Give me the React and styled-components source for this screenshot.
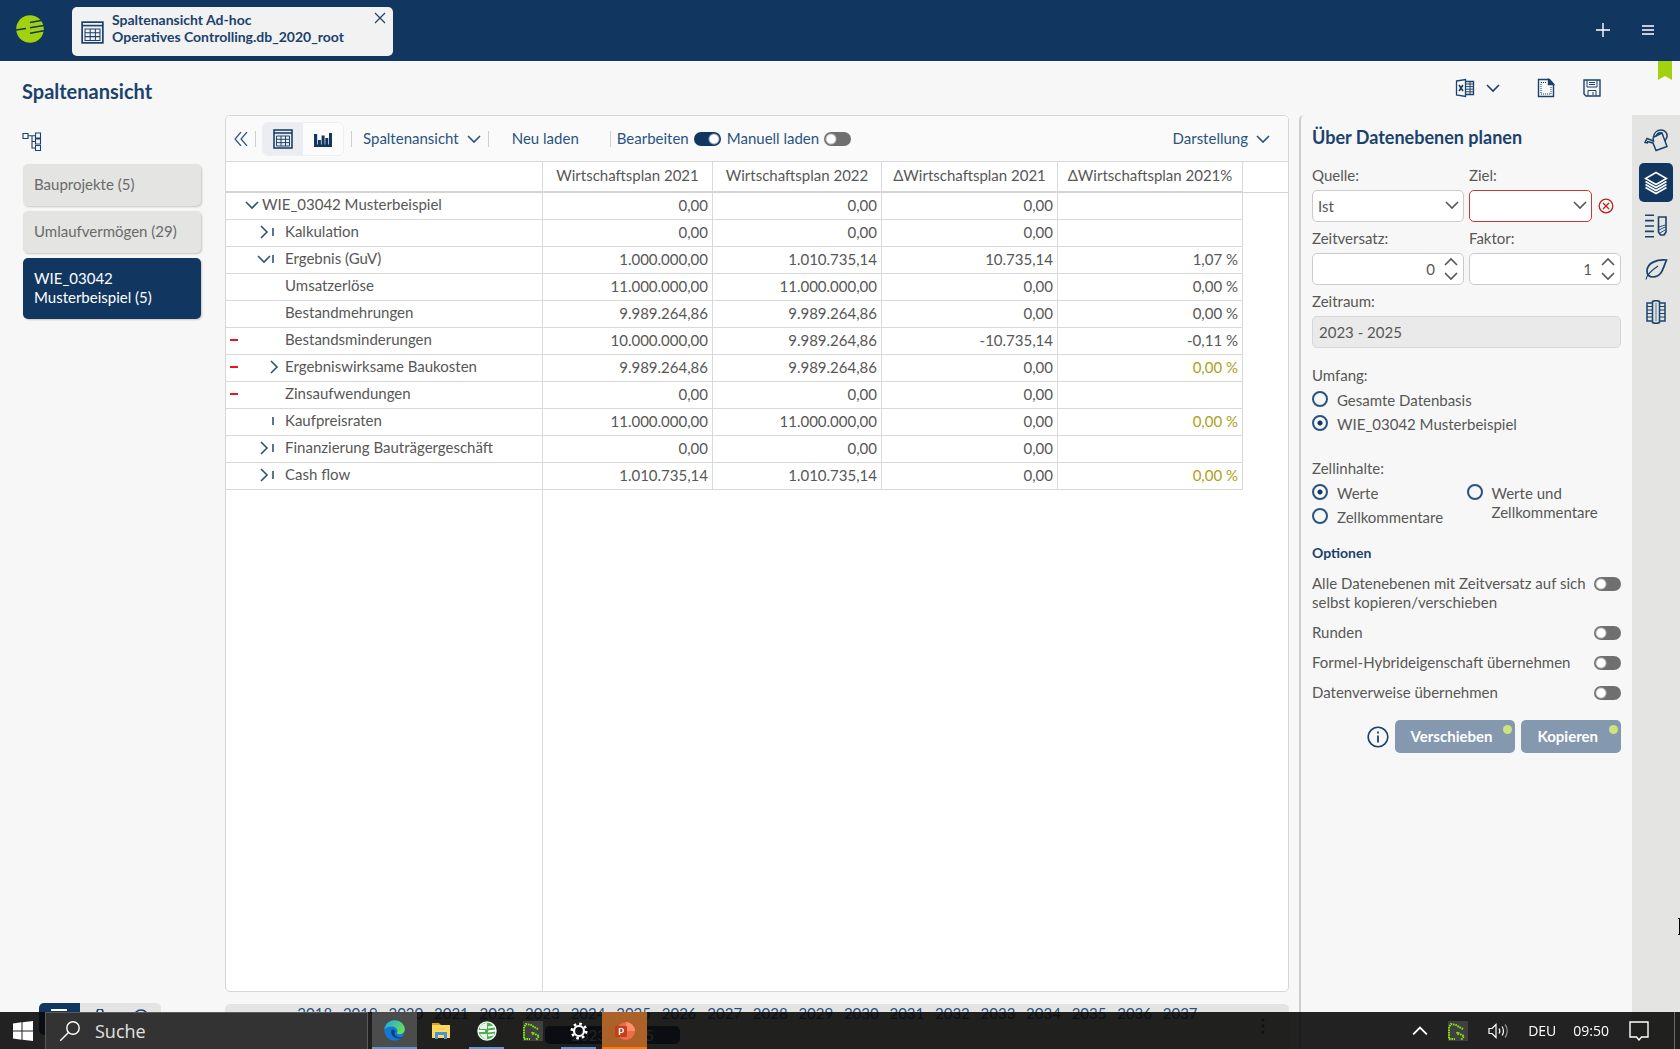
import React, { useState } from 'react';
import styled, { createGlobalStyle, css } from 'styled-components';

// data
const columns = ['Wirtschaftsplan 2021', 'Wirtschaftsplan 2022', 'ΔWirtschaftsplan 2021', 'ΔWirtschaftsplan 2021%'];

const rows = [
  { label: 'WIE_03042 Musterbeispiel', root: true, caret: 'down', values: ['0,00', '0,00', '0,00', ''] },
  { label: 'Kalkulation', caret: 'right', bar: true, values: ['0,00', '0,00', '0,00', ''] },
  { label: 'Ergebnis (GuV)', caret: 'down', bar: true, values: ['1.000.000,00', '1.010.735,14', '10.735,14', '1,07 %'] },
  { label: 'Umsatzerlöse', values: ['11.000.000,00', '11.000.000,00', '0,00', '0,00 %'] },
  { label: 'Bestandmehrungen', values: ['9.989.264,86', '9.989.264,86', '0,00', '0,00 %'] },
  { label: 'Bestandsminderungen', minus: true, values: ['10.000.000,00', '9.989.264,86', '-10.735,14', '-0,11 %'] },
  { label: 'Ergebniswirksame Baukosten', minus: true, caret: 'right', hint: true, values: ['9.989.264,86', '9.989.264,86', '0,00', '0,00 %'] },
  { label: 'Zinsaufwendungen', minus: true, values: ['0,00', '0,00', '0,00', ''] },
  { label: 'Kaufpreisraten', bar: true, hint: true, values: ['11.000.000,00', '11.000.000,00', '0,00', '0,00 %'] },
  { label: 'Finanzierung Bauträgergeschäft', caret: 'right', bar: true, values: ['0,00', '0,00', '0,00', ''] },
  { label: 'Cash flow', caret: 'right', bar: true, hint: true, values: ['1.010.735,14', '1.010.735,14', '0,00', '0,00 %'] },
];

const groups = ['Bauprojekte (5)', 'Umlaufvermögen (29)', 'WIE_03042 Musterbeispiel (5)'];

const years = Array.from({ length: 20 }, (_, i) => 2018 + i);

const options = [
  'Alle Datenebenen mit Zeitversatz auf sich selbst kopieren/verschieben',
  'Runden',
  'Formel-Hybrideigenschaft übernehmen',
  'Datenverweise übernehmen',
];

// icons
const Icon = ({ w = 20, h, children, sw = 1.5, ...rest }) => (
  <svg
    width={w}
    height={h || w}
    viewBox={`0 0 ${w} ${h || w}`}
    fill="none"
    stroke="currentColor"
    strokeWidth={sw}
    aria-hidden="true"
    {...rest}
  >
    {children}
  </svg>
);

const Chevron = ({ dir = 'down', w = 14 }) => {
  const turn = { down: 0, right: -90, up: 180 }[dir];
  return (
    <Icon w={w} viewBox="0 0 14 14" sw={1.6}>
      <path d="M1 4l6 6 6-6" transform={`rotate(${turn} 7 7)`} />
    </Icon>
  );
};

const LogoMark = () => (
  <svg width="28" height="28" viewBox="0 0 28 28" aria-hidden="true">
    <circle cx="14" cy="14" r="13.800" fill="#a2d20f" />
    <path
      d="M0 15L10 13.600M14 7.500L25 5.600M14 12.800L28 10.400M14 18.200L28 15.800"
      stroke="#113660"
      strokeWidth="1.500"
      fill="none"
    />
  </svg>
);

const TableIcon = ({ w = 20 }) => (
  <Icon w={w} viewBox="0 0 20 20" sw={1.5}>
    <rect x="1" y="1" width="18" height="18" />
    <path d="M1 4h18" strokeWidth="1.400" />
    <path d="M3.500 7h13v10h-13zM3.500 10.300h13M3.500 13.600h13M8 7v10M12.500 7v10" strokeWidth=".9" />
  </Icon>
);

const BarsIcon = () => (
  <Icon w={20} fill="currentColor" stroke="none">
    <path d="M1 15.500h18V18H1zM1 5h3.200v12H1zM4.900 11h3v6h-3zM8.600 6.500h3v10.500h-3zM12.300 9h3v8h-3zM16 4h3v13h-3z" />
  </Icon>
);

const TreeIcon = () => (
  <Icon w={20} sw={1.1}>
    <path d="M1 1.500h5v5H1zM13.500 1h5v5h-5zM13.500 7h5v5h-5zM13.500 13.500h5v5h-5zM6 3.800h7.500M10 3.800v12.200h3.500M10 9.500h3.500" />
  </Icon>
);

const ExcelIcon = () => (
  <Icon w={20} sw={1.3}>
    <path d="M1.500 3l9-1.500v17l-9-1.500zM10.500 3.500h8v13h-8" />
    <path d="M15 3.500v13M10.500 6h8M10.500 8.600h8M10.500 11.200h8M10.500 13.800h8" strokeWidth="1" />
    <path d="M4 7l4 6M8 7l-4 6" strokeWidth="1.700" />
  </Icon>
);

const PageIcon = () => (
  <Icon w={20} sw={1.4}>
    <path d="M2.500 1.500h11l4 4.500v12.500h-15z" />
    <path d="M12.500 1.500v5h5z" fill="currentColor" />
    <path d="M5 4.500h6M15 9v7H5V4.500" strokeWidth="1" strokeDasharray="1 1" />
  </Icon>
);

const SaveIcon = () => (
  <Icon w={20} sw={1.4}>
    <path d="M2 2h16v16H4l-2-2z" />
    <path d="M5 2v7h10V2M6 18v-5.500h8V18M7 4.500h6M7 6.500h6M11 14v3" strokeWidth="1" />
  </Icon>
);

const CanIcon = () => (
  <Icon w={24} sw={1.5}>
    <path d="M9 9.500l9-4.500 5 13.500-11 4-3-7.500L3 13.500M9 9.500l.5 3.500L3 10.500l-2 4 3 .5" />
    <path d="M9.500 9C10 5 13 2 17 2c4 0 6.500 3 6 7l-2 4M12 8c1-2.500 3-4 6-3" />
  </Icon>
);

const LayersIcon = () => (
  <Icon w={24} sw={1.7}>
    <path d="M12 1.500l10.500 6L12 13.500 1.500 7.500z" />
    <path d="M1.500 10.500L12 16.500l10.500-6M1.500 13.500L12 19.500l10.500-6M1.500 16.500L12 22.500l10.500-6" />
  </Icon>
);

const ListTubeIcon = () => (
  <Icon w={24} sw={1.6}>
    <path d="M1 1.200h9M1 6.600h9M1 12h9M1 17.400h9M1 22.800h9" />
    <path d="M14.500 3h7.500v15l-2 3h-3.500l-2-3z" />
    <path d="M15 13l6-2M15 16l6-3M16 19l5-3" strokeWidth=".9" />
  </Icon>
);

const LeafIcon = () => (
  <Icon w={24} sw={1.7}>
    <path d="M22.500 3C13 2 3 6 3 14c0 4 2.500 6 6 6 9 0 10-9 13.500-17z" />
    <path d="M2 22.500C3 17 8 13 14 9" strokeWidth="1.200" />
  </Icon>
);

const ColumnsIcon = () => (
  <Icon w={24} sw={1.5}>
    <path d="M3 3h5.500v18H3zM15.500 3H21v18h-5.500zM8.500 1.500c2-1 5-1 7 0v21c-2 1-5 1-7 0z" />
    <path d="M3 6.500h5M3 10h5M3 13.500h5M3 17h5M16 6.500h5M16 10h5M16 13.500h5M16 17h5" strokeWidth="1.100" />
    <path d="M12 3v18" strokeWidth=".7" />
  </Icon>
);

const PixelG = () => (
  <svg width="20" height="20" viewBox="0 0 20 20" aria-hidden="true">
    <rect width="20" height="20" fill="#404040" />
    <path
      d="M15 8L11 6 8 4 3 3 1 6v12h6M9 11l1 3M10 12l6 3-3 4"
      fill="none"
      stroke="#7fe60a"
      strokeWidth="2"
      strokeDasharray="1.600 .8"
    />
  </svg>
);

const EdgeIcon = () => (
  <svg width="21" height="21" viewBox="0 0 21 21" aria-hidden="true">
    <defs>
      <linearGradient id="edgeTop" x1="0" y1="0" x2="1" y2="0.500">
        <stop offset="0" stopColor="#1fa4e6" />
        <stop offset="1" stopColor="#66dd5a" />
      </linearGradient>
    </defs>
    <circle cx="10.500" cy="10.500" r="10.200" fill="#1477d2" />
    <path d="M.4 9.500C1 4 5.500.3 10.500.3c6 0 10.300 4.500 10.300 9 0 3.500-3 5-5.500 5-2 0-3-1-2-2.300C14.500 9 11 6.500 7.500 6.500 4 6.500 1.500 8 .4 9.500z" fill="url(#edgeTop)" />
    <path d="M7.500 10c-1.500 4 2 8.500 7 8.500 2 0 3.500-.8 4.500-1.800-4 1.500-8.500-.2-8.500-3.700 0-1 .4-1.500 1-2C10.500 9.500 8.500 9 7.500 10z" fill="#103f7f" />
  </svg>
);

const FolderIcon = () => (
  <svg width="20" height="18" viewBox="0 0 20 18" aria-hidden="true">
    <path d="M1 1h7l2 2H1z" fill="#e0a010" />
    <path d="M1 3h18v13H1z" fill="#ffd75e" />
    <path d="M4 17v-7h12v7h-3v-4H7v4z" fill="#3f96dc" />
  </svg>
);

const GreenAppIcon = () => (
  <svg width="20" height="20" viewBox="0 0 20 20" aria-hidden="true">
    <circle cx="10" cy="10" r="9" fill="#4caf50" stroke="#e9f5e9" strokeWidth="1.500" />
    <path d="M1 10h7M11 6.500l6-1M11 10.500l8-1M11 14.500l6-1" stroke="#fff" strokeWidth="1.800" />
    <path d="M3 5.500C5 3 8 2 10 2v6H3zM3 13h7v5c-3 0-5-1.500-7-5z" fill="#e9f5e9" />
  </svg>
);

const GearIcon = () => (
  <svg width="18" height="18" viewBox="0 0 18 18" fill="none" stroke="#fff" aria-hidden="true">
    <circle cx="9" cy="9" r="5" strokeWidth="2.200" />
    <circle cx="9" cy="9" r="7.200" strokeWidth="2.600" strokeDasharray="2.600 3.055" />
  </svg>
);

const PptIcon = () => (
  <svg width="20" height="20" viewBox="0 0 20 20" aria-hidden="true">
    <circle cx="11" cy="10" r="9" fill="#ed6c47" />
    <path d="M11 1a9 9 0 0 1 9 9h-9z" fill="#ff8f6b" />
    <rect x="0" y="5" width="12" height="11" rx="1" fill="#c43e1c" />
    <text x="6" y="14" fontSize="10" fontWeight="700" fontFamily="Lato, sans-serif" fill="#fff" textAnchor="middle">P</text>
  </svg>
);

const Toggle = (props) => <Switch type="checkbox" role="switch" {...props} />;

const App = () => {
  const [active, setActive] = useState(2);
  const [edit, setEdit] = useState(true);
  const [manual, setManual] = useState(false);
  const [scope, setScope] = useState('row');
  const [content, setContent] = useState('values');

  return (
    <Page>
      <GlobalStyle />
      <Header>
        <LogoMark />
        <Tab>
          <TableIcon w={23} />
          <TabText>
            Spaltenansicht Ad-hoc
            <br />
            Operatives Controlling.db_2020_root
          </TabText>
          <IconButton aria-label="Tab schließen">
            <Icon w={12} sw={1.2}>
              <path d="M1 1l10 10M11 1L1 11" />
            </Icon>
          </IconButton>
        </Tab>
        <HeaderActions>
          <IconButton aria-label="Neuer Tab">
            <Icon w={14} sw={1.4}>
              <path d="M7 0v14M0 7h14" />
            </Icon>
          </IconButton>
          <IconButton aria-label="Menü">
            <Icon w={14} sw={1.4}>
              <path d="M1 3h12M1 7h12M1 11h12" />
            </Icon>
          </IconButton>
        </HeaderActions>
      </Header>

      <TitleBar>
        <Title>Spaltenansicht</Title>
        <TitleActions>
          <IconButton aria-label="Excel-Export">
            <ExcelIcon />
            <Chevron />
          </IconButton>
          <IconButton aria-label="Bericht">
            <PageIcon />
          </IconButton>
          <IconButton aria-label="Speichern">
            <SaveIcon />
          </IconButton>
        </TitleActions>
        <Bookmark width="14" height="19" viewBox="0 0 14 19" aria-hidden="true">
          <path d="M0 0h14v19l-7-4-7 4z" fill="#a2d20f" />
        </Bookmark>
      </TitleBar>

      <Content>
        <Sidebar>
          <IconButton aria-label="Struktur">
            <TreeIcon />
          </IconButton>
          <GroupList>
            {groups.map((name, i) => (
              <GroupButton key={name} $active={i === active} onClick={() => setActive(i)}>
                {name}
              </GroupButton>
            ))}
          </GroupList>
          <ViewSwitch>
            <ViewButton $active aria-label="Liste">
              <Icon w={16} sw={2}>
                <path d="M0 1h16M0 7h16M0 13h16" />
              </Icon>
            </ViewButton>
            <ViewButton aria-label="Person">
              <Icon w={16}>
                <circle cx="8" cy="3" r="3" />
              </Icon>
            </ViewButton>
            <ViewButton aria-label="Ansicht">
              <Icon w={16}>
                <circle cx="8" cy="8" r="7" />
              </Icon>
            </ViewButton>
          </ViewSwitch>
        </Sidebar>

        <Main>
          <Card>
            <Toolbar>
              <IconButton aria-label="Einklappen">
                <Icon w={14} sw={1.2}>
                  <path d="M7 0L1 7l6 7M13 0L7 7l6 7" />
                </Icon>
              </IconButton>
              <Separator />
              <Segment>
                <SegmentButton $active aria-label="Tabelle">
                  <TableIcon />
                </SegmentButton>
                <SegmentButton aria-label="Diagramm">
                  <BarsIcon />
                </SegmentButton>
              </Segment>
              <Separator />
              <MenuButton>
                Spaltenansicht <Chevron />
              </MenuButton>
              <Separator />
              <ReloadButton>Neu laden</ReloadButton>
              <Separator />
              <SwitchLabel>
                Bearbeiten
                <Toggle checked={edit} onChange={() => setEdit(!edit)} />
              </SwitchLabel>
              <SwitchLabel>
                Manuell laden
                <Toggle checked={manual} onChange={() => setManual(!manual)} />
              </SwitchLabel>
              <Spacer />
              <MenuButton>
                Darstellung <Chevron />
              </MenuButton>
            </Toolbar>
            <Table>
              <colgroup>
                <col width="317" />
                <col width="170" />
                <col width="169" />
                <col width="176" />
                <col width="185" />
                <col />
              </colgroup>
              <thead>
                <tr>
                  <HeadCell />
                  {columns.map((name) => (
                    <HeadCell key={name}>{name}</HeadCell>
                  ))}
                  <HeadCell $last />
                </tr>
              </thead>
              <tbody>
                {rows.map((row) => (
                  <tr key={row.label}>
                    <LabelCell>
                      <LabelInner>
                        <Lead $root={row.root} $bar={row.bar}>
                          {row.minus && <Minus />}
                          {row.caret && <Chevron dir={row.caret} />}
                          {row.bar && <Tick />}
                        </Lead>
                        {row.label}
                      </LabelInner>
                    </LabelCell>
                    {row.values.map((value, i) => (
                      <ValueCell key={columns[i]} $hint={row.hint && i === 3}>
                        {value}
                      </ValueCell>
                    ))}
                    <EmptyCell />
                  </tr>
                ))}
              </tbody>
            </Table>
            <Rest />
          </Card>
          <Timeline>
            <Years>
              {years.map((year) => (
                <Year key={year}>{year}</Year>
              ))}
            </Years>
            <Icon w={4} h={16} fill="currentColor" stroke="none">
              <circle cx="2" cy="2" r="1.500" />
              <circle cx="2" cy="8" r="1.500" />
              <circle cx="2" cy="14" r="1.500" />
            </Icon>
            <Range>2023 - 2025</Range>
          </Timeline>
        </Main>

        <Panel>
          <PanelTitle>Über Datenebenen planen</PanelTitle>
          <FieldGrid>
            <Field>
              <label htmlFor="source">Quelle:</label>
              <SelectBox>
                <select id="source" defaultValue="Ist">
                  <option>Ist</option>
                </select>
                <Chevron />
              </SelectBox>
            </Field>
            <Field>
              <label htmlFor="target">Ziel:</label>
              <TargetRow>
                <SelectBox $invalid>
                  <select id="target" defaultValue="">
                    <option value="" />
                  </select>
                  <Chevron />
                </SelectBox>
                <Icon w={16} sw={1.3} stroke="#b9211f">
                  <circle cx="8" cy="8" r="6.800" />
                  <path d="M5 5l6 6M11 5l-6 6" />
                </Icon>
              </TargetRow>
            </Field>
            <Field>
              <label htmlFor="offset">Zeitversatz:</label>
              <NumberBox>
                <input id="offset" defaultValue="0" inputMode="numeric" />
                <span>
                  <Chevron dir="up" />
                  <Chevron />
                </span>
              </NumberBox>
            </Field>
            <Field>
              <label htmlFor="factor">Faktor:</label>
              <NumberBox>
                <input id="factor" defaultValue="1" inputMode="numeric" />
                <span>
                  <Chevron dir="up" />
                  <Chevron />
                </span>
              </NumberBox>
            </Field>
            <Field $wide>
              <label htmlFor="period">Zeitraum:</label>
              <ReadOnly id="period" readOnly value="2023 - 2025" />
            </Field>
          </FieldGrid>

          <RadioGroup>
            <legend>Umfang:</legend>
            <RadioLabel>
              <Radio type="radio" name="scope" checked={scope === 'all'} onChange={() => setScope('all')} />
              Gesamte Datenbasis
            </RadioLabel>
            <RadioLabel>
              <Radio type="radio" name="scope" checked={scope === 'row'} onChange={() => setScope('row')} />
              WIE_03042 Musterbeispiel
            </RadioLabel>
          </RadioGroup>

          <RadioGroup>
            <legend>Zellinhalte:</legend>
            <RadioColumns>
              <div>
                <RadioLabel>
                  <Radio type="radio" name="content" checked={content === 'values'} onChange={() => setContent('values')} />
                  Werte
                </RadioLabel>
                <RadioLabel>
                  <Radio type="radio" name="content" checked={content === 'comments'} onChange={() => setContent('comments')} />
                  Zellkommentare
                </RadioLabel>
              </div>
              <RadioLabel>
                <Radio type="radio" name="content" checked={content === 'both'} onChange={() => setContent('both')} />
                Werte und Zellkommentare
              </RadioLabel>
            </RadioColumns>
          </RadioGroup>

          <SubTitle>Optionen</SubTitle>
          <OptionList>
            {options.map((text) => (
              <OptionLabel key={text}>
                <span>{text}</span>
                <Toggle />
              </OptionLabel>
            ))}
          </OptionList>
          <PanelActions>
            <Icon w={22} sw={1.6}>
              <circle cx="11" cy="11" r="9.800" />
              <path d="M11 9.500v7M11 5.500v2" strokeWidth="1.800" />
            </Icon>
            <ActionButton>Verschieben</ActionButton>
            <ActionButton>Kopieren</ActionButton>
          </PanelActions>
        </Panel>

        <Rail>
          <RailButton aria-label="Gießen">
            <CanIcon />
          </RailButton>
          <RailButton $active aria-label="Datenebenen">
            <LayersIcon />
          </RailButton>
          <RailButton aria-label="Werte">
            <ListTubeIcon />
          </RailButton>
          <RailButton aria-label="Blatt">
            <LeafIcon />
          </RailButton>
          <RailButton aria-label="Spalten">
            <ColumnsIcon />
          </RailButton>
        </Rail>
      </Content>

      <Taskbar>
        <StartButton aria-label="Start">
          <svg width="20" height="20" viewBox="0 0 20 20" fill="#fff" aria-hidden="true">
            <path d="M0 2.500l8.500-1.200v8.200H0zM9.500 1.200L20 0v9.500H9.500zM0 10.500h8.500v8.200L0 17.500zM9.500 10.500H20V20L9.500 18.800z" />
          </svg>
        </StartButton>
        <SearchBox>
          <Icon w={20} sw={1.4}>
            <circle cx="13" cy="7" r="6.200" />
            <path d="M8.500 11.500L0 20" />
          </Icon>
          <input aria-label="Suche" placeholder="Suche" />
        </SearchBox>
        <Apps>
          <AppButton $active $line="#5f97d8" aria-label="Edge">
            <EdgeIcon />
          </AppButton>
          <AppButton aria-label="Explorer">
            <FolderIcon />
          </AppButton>
          <AppButton $short $line="#5f97d8" aria-label="Planung">
            <GreenAppIcon />
          </AppButton>
          <AppButton aria-label="Greenshot">
            <PixelG />
          </AppButton>
          <AppButton $short $line="#5f97d8" aria-label="Einstellungen">
            <GearIcon />
          </AppButton>
          <AppButton $alert $line="#ff7a00" aria-label="PowerPoint">
            <PptIcon />
          </AppButton>
        </Apps>
        <Tray>
          <Chevron dir="up" w={16} />
          <PixelG />
          <Icon w={20} sw={1.2}>
            <path d="M1 7.500h3l4-4v13l-4-4H1zM11 7.500c1 1.500 1 3.500 0 5M14 5.500c2 2.500 2 6.500 0 9" />
            <path d="M17 3.500c3 3.500 3 9.500 0 13" opacity=".5" />
          </Icon>
          <Clock>
            <span>DEU</span>
            <time>09:50</time>
          </Clock>
          <Icon w={20} sw={1.4}>
            <path d="M1 1h18v15h-6.500l-2.500 3-2.500-3H1z" />
          </Icon>
          <DesktopEdge />
        </Tray>
      </Taskbar>
      <Pointer width="2" height="17" viewBox="0 0 2 17" aria-hidden="true">
        <path d="M0 0h2v17H0v-1h1V1H0z" fill="#000" />
      </Pointer>
    </Page>
  );
};

const GlobalStyle = createGlobalStyle`
  * {
    box-sizing: border-box;
  }
  body {
    margin: 0;
    background: #f7f7f7;
    font-family: Lato, 'Open Sans', sans-serif;
    font-size: 15px;
    line-height: 19px;
    color: #575756;
  }
  button, input, select {
    font: inherit;
    color: inherit;
  }
  button {
    cursor: pointer;
  }
`;

const Page = styled.div`
  display: flex;
  flex-direction: column;
  height: 100vh;
  overflow: hidden;
`;

const IconButton = styled.button`
  display: flex;
  align-items: center;
  gap: 11px;
  padding: 0;
  border: 0;
  background: none;
  color: inherit;
`;

const Header = styled.header`
  display: flex;
  align-items: center;
  flex: none;
  height: 61px;
  padding: 0 25px 4px 16px;
  background: #113660;
  color: #fff;
`;

const Tab = styled.div`
  display: flex;
  align-items: center;
  gap: 8px;
  width: 321px;
  height: 49px;
  margin: 5px 0 0 28px;
  padding: 0 7px 0 9px;
  border-radius: 5px;
  background: #f2f2f2;
  color: #1a426d;

  > svg {
    flex: none;
    margin-top: 2px;
  }
  ${IconButton} {
    align-self: flex-start;
    margin: 5px 0 0 auto;
  }
`;

const TabText = styled.div`
  padding-bottom: 7px;
  font-weight: 700;
  font-size: 14px;
  line-height: 17px;
`;

const HeaderActions = styled.div`
  display: flex;
  gap: 31px;
  margin-left: auto;
  padding-top: 3px;
`;

const TitleBar = styled.div`
  position: relative;
  display: flex;
  align-items: center;
  justify-content: space-between;
  flex: none;
  height: 54px;
  padding: 0 78px 0 22px;
  color: #1a426d;
`;

const Title = styled.h1`
  margin: 6px 0 0;
  font-size: 20px;
  line-height: 24px;
  font-weight: 700;
`;

const TitleActions = styled.div`
  display: flex;
  align-items: center;

  ${IconButton} + ${IconButton} {
    margin-left: 36px;
  }
  ${IconButton} + ${IconButton} + ${IconButton} {
    margin-left: 26px;
  }
`;

const Bookmark = styled.svg`
  position: absolute;
  top: 0;
  right: 8px;
`;

const Content = styled.div`
  display: flex;
  flex: 1;
  min-height: 0;
`;

const Sidebar = styled.aside`
  display: flex;
  flex-direction: column;
  flex: none;
  width: 225px;
  padding: 17px 24px 14px 22px;
  color: #1a426d;
`;

const GroupList = styled.div`
  display: flex;
  flex-direction: column;
  gap: 5px;
  margin: 12px 0 0 1px;
`;

const GroupButton = styled.button`
  padding: 11px 16px 12px 11px;
  border: 0;
  border-radius: 5px;
  background: ${({ $active }) => ($active ? '#113660' : '#e4e4e2')};
  color: ${({ $active }) => ($active ? '#fff' : '#6a6a69')};
  box-shadow: 1px 1px 2px rgba(0, 0, 0, 0.2);
  text-align: left;
`;

const ViewSwitch = styled.div`
  display: flex;
  width: 122px;
  margin: auto 0 0 17px;
  border-radius: 5px;
  overflow: hidden;
`;

const ViewButton = styled.button`
  flex: 1;
  height: 32px;
  padding: 0;
  border: 0;
  background: ${({ $active }) => ($active ? '#113660' : '#e4e4e2')};
  color: ${({ $active }) => ($active ? '#fff' : '#1a426d')};
`;

const Main = styled.main`
  display: flex;
  flex-direction: column;
  flex: 1;
  min-width: 0;
`;

const Card = styled.section`
  display: flex;
  flex-direction: column;
  flex: 1;
  border: 1px solid #d6d6d6;
  border-radius: 5px;
  background: #fff;
  overflow: hidden;
`;

const Toolbar = styled.div`
  display: flex;
  align-items: center;
  height: 45px;
  padding: 0 18px 0 8px;
  background: #fafafa;
  color: #2a5380;
`;

const Separator = styled.i`
  width: 1px;
  height: 16px;
  margin: 0 6px 0 7px;
  background: #cfcfcf;
`;

const Segment = styled.div`
  display: flex;
  border: 1px solid #eeeff2;
  border-radius: 6px;
  overflow: hidden;
`;

const SegmentButton = styled.button`
  display: flex;
  align-items: center;
  justify-content: center;
  width: 40px;
  height: 32px;
  padding: 0;
  border: 0;
  background: ${({ $active }) => ($active ? '#ebedf1' : '#fcfcfc')};
  color: #113660;
`;

const MenuButton = styled.button`
  display: flex;
  align-items: center;
  gap: 8px;
  padding: 0;
  border: 0;
  background: none;

  ${Separator} + & {
    margin-left: 5px;
  }
`;

const ReloadButton = styled.button`
  padding: 0 24px 0 17px;
  border: 0;
  background: none;
`;

const SwitchLabel = styled.label`
  display: flex;
  align-items: center;
  gap: 5px;

  & + & {
    margin-left: 6px;
  }
`;

const Switch = styled.input`
  appearance: none;
  flex: none;
  display: block;
  width: 27px;
  height: 14px;
  margin: 0;
  border-radius: 7px;
  background: radial-gradient(circle at 7px 7px, #fff 4px, #6f6f6f 6px);

  &:checked {
    background: radial-gradient(circle at 20px 7px, #fff 4px, #113660 6px);
  }
`;

const Spacer = styled.div`
  flex: 1;
`;

const Table = styled.table`
  width: 100%;
  table-layout: fixed;
  border-collapse: separate;
  border-spacing: 0;
`;

const cell = css`
  height: 27px;
  padding: 0;
  border-right: 1px solid #d9d9d9;
  border-bottom: 1px solid #d9d9d9;
`;

const HeadCell = styled.th`
  ${cell}
  height: 32px;
  border-top: 1px solid #d9d9d9;
  border-bottom: ${({ $last }) => ($last ? 1 : 2)}px solid #d4d4d4;
  padding-bottom: 2px;
  font-weight: 400;
  white-space: nowrap;
  ${({ $last }) => $last && 'border-right: 0;'}
`;

const LabelCell = styled.td`
  ${cell}
  padding-bottom: 3px;
`;

const LabelInner = styled.div`
  display: flex;
  align-items: center;
  white-space: nowrap;
`;

const Lead = styled.span`
  display: flex;
  align-items: center;
  justify-content: flex-end;
  flex: none;
  width: ${({ $root }) => ($root ? 36 : 59)}px;
  padding-right: ${({ $root, $bar }) => ($bar ? 11 : $root ? 3 : 4)}px;
  color: #2a5380;
`;

const Minus = styled.i`
  width: 8px;
  height: 2px;
  margin: 0 auto 0 4px;
  background: #f01414;
`;

const Tick = styled.i`
  width: 2px;
  height: 8px;
  margin-left: 1px;
  background: #5b7690;
`;

const ValueCell = styled.td`
  ${cell}
  padding: 0 4px 1px 0;
  text-align: right;
  color: ${({ $hint }) => ($hint ? '#ada021' : 'inherit')};
`;

const EmptyCell = styled.td`
  padding: 0;
`;

const Rest = styled.div`
  flex: 1;
  width: 317px;
  border-right: 1px solid #d9d9d9;
`;

const Timeline = styled.div`
  position: relative;
  display: flex;
  flex: none;
  height: 45px;
  margin-top: 12px;
  padding: 0 24px 0 67px;
  border-radius: 5px 5px 0 0;
  background: #e4e4e2;
  color: #2a5380;

  svg {
    margin: 14px 0 0 auto;
  }
`;

const Years = styled.div`
  display: flex;
  flex: 1;
  margin-right: 58px;
`;

const Year = styled.span`
  flex: 1;
  text-align: center;
`;

const Range = styled.div`
  position: absolute;
  top: 22px;
  left: 320px;
  width: 135px;
  height: 18px;
  border-radius: 5px;
  background: #113660;
  color: #fff;
  text-align: center;
`;

const Panel = styled.section`
  flex: none;
  width: 333px;
  margin-left: 10px;
  padding: 11px 11px 0 11px;
  border-left: 2px solid #cdcdcd;
  border-top-left-radius: 5px;
`;

const PanelTitle = styled.h2`
  margin: 0 0 17px;
  font-size: 18px;
  line-height: 22px;
  font-weight: 700;
  color: #1a426d;
`;

const FieldGrid = styled.div`
  display: grid;
  grid-template-columns: repeat(2, minmax(0, 1fr));
  gap: 6px 5px;
`;

const Field = styled.div`
  display: flex;
  flex-direction: column;
  gap: 5px;
  ${({ $wide }) => $wide && 'grid-column: span 2;'}

  label {
    line-height: 20px;
  }
`;

const boxed = css`
  width: 100%;
  height: 32px;
  border: 1px solid #cbcbcb;
  border-radius: 5px;
  background: #fff;
`;

const SelectBox = styled.div`
  position: relative;
  flex: 1;
  min-width: 0;

  select {
    ${boxed}
    display: block;
    appearance: none;
    padding: 0 5px;
    border-color: ${({ $invalid }) => ($invalid ? '#c23b3b' : '#cbcbcb')};
  }
  svg {
    position: absolute;
    top: 8px;
    right: 5px;
    pointer-events: none;
  }
`;

const TargetRow = styled.div`
  display: flex;
  align-items: center;
  gap: 6px;
  padding-right: 7px;
`;

const NumberBox = styled.div`
  ${boxed}
  display: flex;
  align-items: center;
  padding-right: 5px;

  input {
    flex: 1;
    min-width: 0;
    padding: 0 9px 0 0;
    border: 0;
    outline: 0;
    background: none;
    text-align: right;
  }
  span {
    display: flex;
    flex-direction: column;
  }
`;

const ReadOnly = styled.input`
  ${boxed}
  padding: 0 6px;
  background: #eaeaea;
  border-color: #d6d6d6;
`;

const RadioGroup = styled.fieldset`
  margin: 17px 0 0;
  padding: 0;
  border: 0;

  & + & {
    margin-top: 21px;
  }
  legend {
    padding: 0;
    margin-bottom: 4px;
    line-height: 20px;
  }
`;

const RadioLabel = styled.label`
  display: flex;
  align-items: flex-start;
  gap: 9px;
  padding: 2px 0 3px;
`;

const Radio = styled.input`
  appearance: none;
  flex: none;
  width: 16px;
  height: 16px;
  margin: 0;
  border: 2px solid #2a5380;
  border-radius: 50%;

  &:checked {
    background: radial-gradient(circle, #113660 2px, transparent 3px);
  }
`;

const RadioColumns = styled.div`
  display: grid;
  grid-template-columns: 1fr 1fr;
`;

const SubTitle = styled.h3`
  margin: 13px 0 11px;
  font-size: 14px;
  line-height: 20px;
  font-weight: 700;
  color: #1a426d;
`;

const OptionList = styled.div`
  display: flex;
  flex-direction: column;
  gap: 11px;
`;

const OptionLabel = styled.label`
  display: flex;
  align-items: flex-start;
  justify-content: space-between;
  gap: 4px;

  input {
    margin-top: 3px;
  }
`;

const PanelActions = styled.div`
  display: flex;
  align-items: center;
  justify-content: flex-end;
  gap: 6px;
  margin-top: 18px;
  color: #1a426d;
`;

const ActionButton = styled.button`
  position: relative;
  height: 33px;
  padding: 0 23px 0 16px;
  border: 0;
  border-radius: 5px;
  background: #8498af;
  color: #fff;
  font-weight: 700;

  &::after {
    content: '';
    position: absolute;
    top: 5px;
    right: 3px;
    width: 9px;
    height: 9px;
    border-radius: 50%;
    background: #cde37c;
  }
`;

const Rail = styled.nav`
  display: flex;
  flex-direction: column;
  align-items: center;
  flex: none;
  gap: 4px;
  width: 48px;
  padding-top: 5px;
  background: #e4e4e2;
`;

const RailButton = styled.button`
  display: flex;
  align-items: center;
  justify-content: center;
  width: 34px;
  height: 39px;
  padding: 0;
  border: 0;
  border-radius: 5px;
  background: ${({ $active }) => ($active ? '#113660' : 'none')};
  color: ${({ $active }) => ($active ? '#fff' : '#1a426d')};
`;

const Taskbar = styled.footer`
  position: fixed;
  left: 0;
  right: 0;
  bottom: 0;
  display: flex;
  height: 37px;
  background: rgba(10, 10, 10, 0.9);
  color: #fff;
  font-family: 'Open Sans', 'Noto Sans', sans-serif;
`;

const StartButton = styled.button`
  display: flex;
  align-items: center;
  justify-content: center;
  width: 45px;
  padding: 0;
  border: 0;
  background: none;
`;

const SearchBox = styled.div`
  display: flex;
  align-items: center;
  gap: 15px;
  width: 323px;
  padding: 0 14px;
  border: 1px solid #5a5a5a;
  border-bottom: 0;
  background: #333;

  input {
    flex: 1;
    min-width: 0;
    padding: 0;
    border: 0;
    outline: 0;
    background: none;
    font-size: 18px;
  }
  input::placeholder {
    color: #e2e2e2;
  }
`;

const Apps = styled.div`
  display: flex;
  gap: 1px;
  margin-left: 4px;
`;

const AppButton = styled.button`
  position: relative;
  display: flex;
  align-items: center;
  justify-content: center;
  width: 45px;
  padding: 0;
  border: 0;
  background: ${({ $active, $alert }) => ($alert ? '#ac6128' : $active ? '#4c4c4c' : 'none')};

  &::after {
    content: '';
    position: absolute;
    bottom: 0;
    left: ${({ $short }) => ($short ? 5 : 0)}px;
    right: ${({ $short }) => ($short ? 5 : 0)}px;
    height: 2px;
    background: ${({ $line }) => $line || 'none'};
  }
`;

const Tray = styled.div`
  display: flex;
  align-items: center;
  gap: 20px;
  margin-left: auto;
  font-size: 14px;
`;

const Clock = styled.div`
  display: flex;
  gap: 17px;
`;

const DesktopEdge = styled.i`
  align-self: stretch;
  width: 6px;
  margin-left: 5px;
  border-left: 1px solid #6b6b6b;
`;

const Pointer = styled.svg`
  position: fixed;
  right: 0;
  bottom: 114px;
  pointer-events: none;
`;

export default App;
